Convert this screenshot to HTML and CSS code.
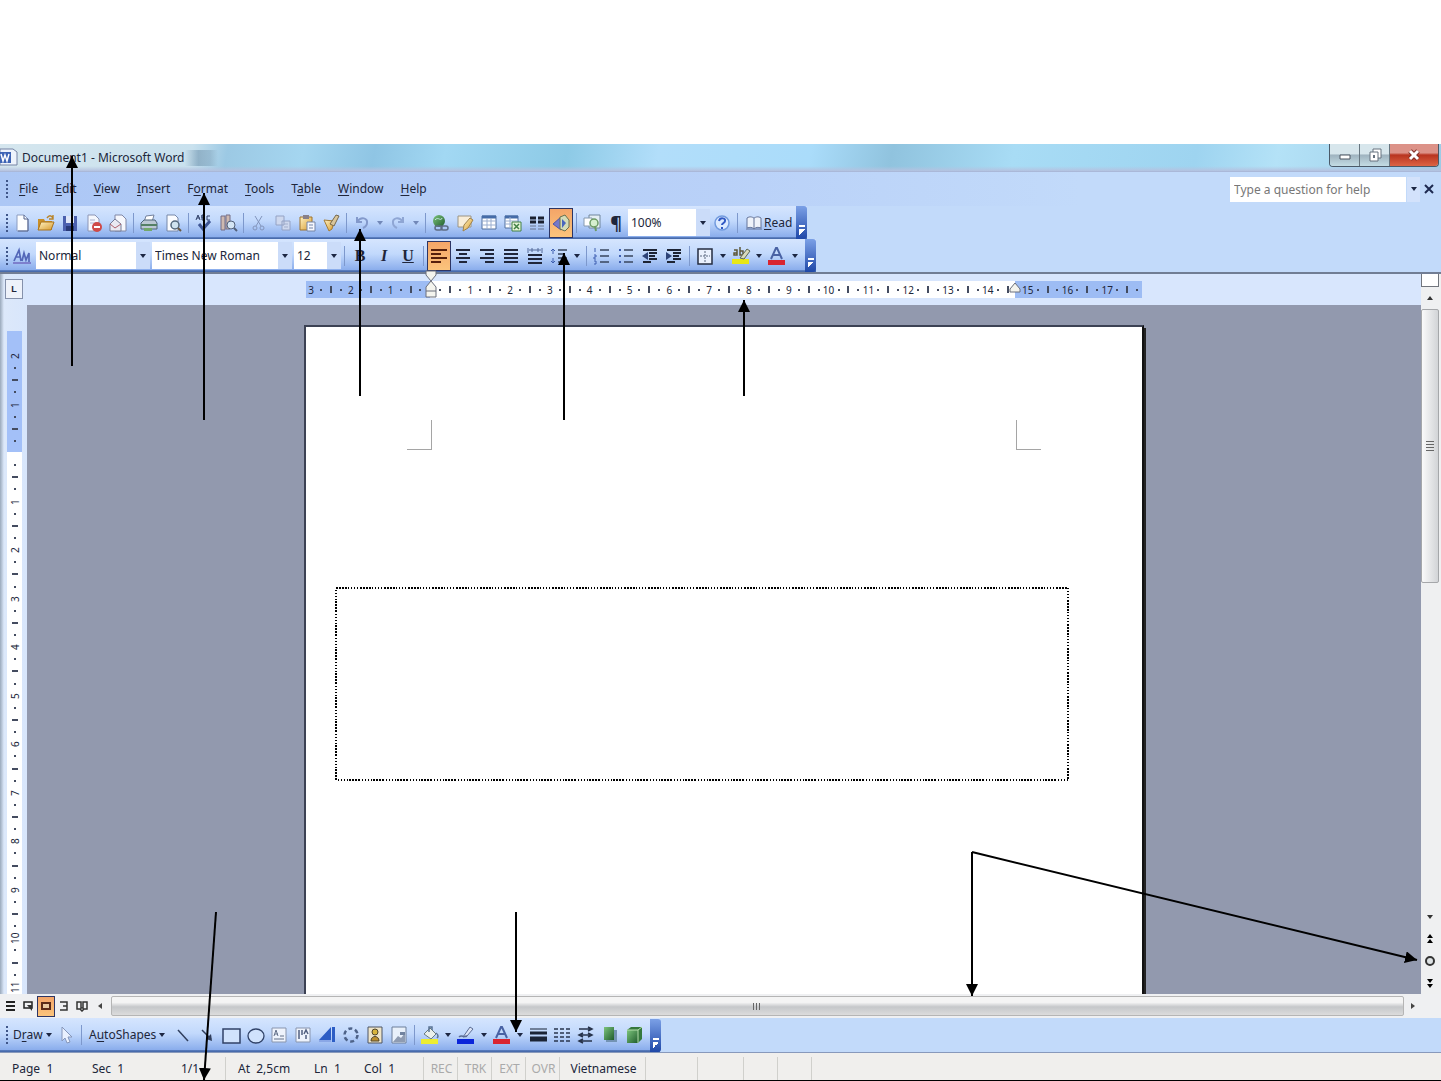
FILE: index.html
```html
<!DOCTYPE html>
<html lang="en">
<head>
<meta charset="utf-8">
<title>Document1 - Microsoft Word</title>
<link rel="stylesheet" href="styles.css">
</head>
<body>
<svg class="defs" aria-hidden="true">
  <defs>
    <linearGradient id="gold" x2="1" y2="1"><stop stop-color="#fff3c4"/><stop offset="1" stop-color="#d89a2c"/></linearGradient>
    <linearGradient id="green" x2="1" y2="1"><stop stop-color="#7cc47c"/><stop offset="1" stop-color="#1f5c2c"/></linearGradient>
    <marker id="head" viewBox="0 0 12 12" refX="12" refY="6" markerWidth="12" markerHeight="12" markerUnits="userSpaceOnUse" orient="auto"><path d="M0 0 12 6 0 12z"/></marker>
    <symbol id="i-new" viewBox="0 0 20 20"><path d="M5 2h7l4 4v12H5z" fill="#fdfeff" stroke="#8c9cc0"/><path d="M12 2v4h4M16 6v12H6" fill="none" stroke="#52628c"/></symbol>
    <symbol id="i-open" viewBox="0 0 20 20"><path d="M2 6h6l1 2h7v9H2z" fill="#c98f28"/><path d="M5 9h13l-3 8H2z" fill="url(#gold)" stroke="#a8731c"/><path d="M11 5c2-3 4-3 6 0m0-3v4h-4" fill="none" stroke="#b98428" stroke-width="1.4"/></symbol>
    <symbol id="i-save" viewBox="0 0 20 20"><path d="M3 3h14v15H3z" fill="#4b60ae"/><path d="M6 3h8v7H6z" fill="#dfe6f8"/><path d="M6 13h8v5H6z" fill="#293a78"/><path d="M11 14h2v3h-2z" fill="#fff"/></symbol>
    <symbol id="i-perm" viewBox="0 0 20 20"><path d="M4 2h7l4 4v12H4z" fill="#f5f7fd" stroke="#8c95b4"/><path d="M6 7h5M6 10h7" stroke="#a9b2cc"/><circle cx="13" cy="14" r="5" fill="#cf4a48"/><path d="M10 14h6" stroke="#fff" stroke-width="2"/></symbol>
    <symbol id="i-mail" viewBox="0 0 20 20"><path d="M7 2h7l4 4v12H7z" fill="#f6f7fc" stroke="#8088a6"/><path d="m2 11 5-5 6 5v7H2z" fill="#e9e9f2" stroke="#767c96"/><path d="m2 11 5 4 6-4" fill="none" stroke="#b0606c"/></symbol>
    <symbol id="i-print" viewBox="0 0 20 20"><path d="m7 3 8-1-2 7H5z" fill="#fff" stroke="#72809c"/><path d="m2 10 3-3h11l2 3v6H2z" fill="#bcc8d4" stroke="#4e6478"/><path d="M2 12h16" stroke="#558066" stroke-width="2"/><path d="M5 15h8v3H5z" fill="#73a86a"/></symbol>
    <symbol id="i-preview" viewBox="0 0 20 20"><path d="M4 2h8l3 3v13H4z" fill="#fbfcff" stroke="#7787a8"/><circle cx="12" cy="12" r="4" fill="#cfe3ef" stroke="#52687c" stroke-width="1.5"/><path d="m15 15 3 3" stroke="#695a42" stroke-width="2"/></symbol>
    <symbol id="i-spell" viewBox="0 0 20 20"><path d="M2 7 4 2l2 5M3 5h3M8 2v5h2V5H8V2h2v3m6-2h-3v4h3" fill="none" stroke="#304068"/><path d="m5 11 4 5 7-8" fill="none" stroke="#3f5796" stroke-width="3"/></symbol>
    <symbol id="i-research" viewBox="0 0 20 20"><path d="M3 3h4v14H3zm5-1h4v14H8z" fill="#ceb9b0" stroke="#756d84"/><circle cx="13" cy="12" r="4" fill="#d4e5f4" stroke="#52607a"/><path d="m16 15 3 3" stroke="#52607a" stroke-width="2"/></symbol>
    <symbol id="i-cut" viewBox="0 0 20 20"><path d="m6 3 6 10m1-10L7 13" fill="none" stroke="#8395bc"/><circle cx="6" cy="15" r="2" fill="none" stroke="#8395bc"/><circle cx="13" cy="15" r="2" fill="none" stroke="#8395bc"/></symbol>
    <symbol id="i-copy" viewBox="0 0 20 20"><path d="M3 3h8v9H3zm6 5h8v9H9z" fill="#ced8ee" stroke="#94a2c4"/><path d="M11 11h4m-4 3h4" stroke="#a3afcc"/></symbol>
    <symbol id="i-paste" viewBox="0 0 20 20"><path d="M3 4h12v13H3z" fill="url(#gold)" stroke="#9e722c"/><path d="M6 2h6v4H6z" fill="#88808a"/><path d="M10 9h8v9h-8z" fill="#f6f8fe" stroke="#7585a8"/><path d="M12 12h4m-4 3h4" stroke="#7585a8"/></symbol>
    <symbol id="i-brush" viewBox="0 0 20 20"><path d="m3 7 10 1-2 8-3 2z" fill="url(#gold)" stroke="#a67b30"/><path d="m9 11 6-9 3 1-5 10z" fill="#d9c69c" stroke="#75684e"/></symbol>
    <symbol id="i-undo" viewBox="0 0 20 20"><path d="M5 4v5h5M5 9c4-6 11-4 10 1 0 3-2 4-4 5" fill="none" stroke="#8399cb" stroke-width="2"/></symbol>
    <symbol id="i-redo" viewBox="0 0 20 20"><path d="M15 4v5h-5m5 0C11 3 4 5 5 10c0 3 2 4 4 5" fill="none" stroke="#8fa6d4" stroke-width="2"/></symbol>
    <symbol id="i-link" viewBox="0 0 20 20"><circle cx="8" cy="8" r="6" fill="url(#green)"/><path d="M4 7c3-4 6 2 7-2" stroke="#c0e2dc" fill="none"/><rect x="4" y="13" width="7" height="4" rx="2" fill="none" stroke="#5d6c84" stroke-width="1.5"/><rect x="10" y="13" width="7" height="4" rx="2" fill="none" stroke="#5d6c84" stroke-width="1.5"/></symbol>
    <symbol id="i-tables" viewBox="0 0 20 20"><path d="M3 3h13v11H3z" fill="#f8edd8" stroke="#9a9484"/><path d="m8 18 1-6 6-7 3 2-5 8z" fill="url(#gold)" stroke="#a0824a"/></symbol>
    <symbol id="i-table" viewBox="0 0 20 20"><path d="M3 3h14v13H3z" fill="#fff" stroke="#52709e"/><path d="M3 4h14" stroke="#456ca8" stroke-width="3"/><path d="M3 8h14M3 12h14M8 5v11M12 5v11" stroke="#9aaed0"/></symbol>
    <symbol id="i-excel" viewBox="0 0 20 20"><path d="M2 3h13v12H2z" fill="#fff" stroke="#52709e"/><path d="M2 4h13" stroke="#456ca8" stroke-width="3"/><path d="M2 8h13M2 11h13M7 4v10" stroke="#9aaed0"/><path d="M9 9h9v9H9z" fill="#e5f3d8" stroke="#408044"/><path d="m11 11 5 5m0-5-5 5" stroke="#408044" stroke-width="1.5"/></symbol>
    <symbol id="i-cols" viewBox="0 0 20 20"><path d="M3 5h6m2 0h6M3 9h6m2 0h6" stroke="#1b2130" stroke-width="3"/><path d="M3 13h6m2 0h6M3 16h6m2 0h6" stroke="#68758e"/></symbol>
    <symbol id="i-drawing" viewBox="0 0 20 20"><path d="m2 11 8-7v13z" fill="#7478c8" stroke="#5054a8"/><path d="m9 4 5-2 4 5v7l-4 4-5-2z" fill="#d4dcb8" stroke="#69714e"/><path d="M11 6v9l4-5z" fill="#4966bd"/></symbol>
    <symbol id="i-map" viewBox="0 0 20 20"><path d="M7 2h11v13H7z" fill="#e4eef4" stroke="#71869c"/><path d="M2 5h8v8H2z" fill="#fff" stroke="#869ab0"/><circle cx="12" cy="10" r="4" fill="#d6efce" stroke="#6c9a64" stroke-width="1.5"/><path d="m13 13 1 5" stroke="#6c9a64" stroke-width="2"/></symbol>
    <symbol id="i-help" viewBox="0 0 20 20"><circle cx="10" cy="10" r="7" fill="#dceaff" stroke="#719ade" stroke-width="1.5"/><path d="M7 8c1-4 7-3 6 0 0 2-3 2-3 4m0 2v2" fill="none" stroke="#3159c4" stroke-width="2"/></symbol>
    <symbol id="i-book" viewBox="0 0 20 20"><path d="M3 5c3-2 5-1 7 0 2-1 4-2 7 0v10c-3-1-5-1-7 1-2-2-4-2-7-1z" fill="#eef2fa" stroke="#64749a"/><path d="M10 5v11M2 16h16" stroke="#64749a"/></symbol>
    <symbol id="i-styles" viewBox="0 0 20 20"><path d="m2 15 5-11 2 11M4 11h5m1 4 2-8 2 7 3-7v9" fill="none" stroke="#5367b8" stroke-width="1.7"/><path d="M1 17h18" stroke="#726ac0" stroke-width="1.5"/></symbol>
    <symbol id="i-left" viewBox="0 0 20 20"><path d="M2 4h16M2 8h10M2 12h16M2 16h10" stroke="currentColor" stroke-width="2"/></symbol>
    <symbol id="i-center" viewBox="0 0 20 20"><path d="M3 4h14M6 8h8M3 12h14M6 16h8" stroke="currentColor" stroke-width="2"/></symbol>
    <symbol id="i-right" viewBox="0 0 20 20"><path d="M3 4h14M8 8h9M3 12h14M8 16h9" stroke="currentColor" stroke-width="2"/></symbol>
    <symbol id="i-justify" viewBox="0 0 20 20"><path d="M3 4h14M3 8h14M3 12h14M3 16h14" stroke="currentColor" stroke-width="2"/></symbol>
    <symbol id="i-dist" viewBox="0 0 20 20"><path d="M3 2v5m14-5v5M4 4h12M7 2v4m6-4v4" stroke="#536898"/><path d="M3 9h14M3 13h14M3 17h14" stroke="currentColor" stroke-width="2"/></symbol>
    <symbol id="i-spacing" viewBox="0 0 20 20"><path d="M4 3v5M2 5l2-2 2 2m-2 7v5m-2-2 2 2 2-2" stroke="#3e5fb0" fill="none"/><path d="M9 4h9M9 8h6M9 12h9M9 16h6" stroke="#38465e" stroke-width="1.5"/></symbol>
    <symbol id="i-num" viewBox="0 0 20 20"><path d="M3 2v4M2 9h2v2H2v2h2M2 15h2v3H2" stroke="#3e5fb0" fill="none"/><path d="M8 4h9M8 10h9M8 16h9" stroke="#38465e" stroke-width="1.5"/></symbol>
    <symbol id="i-bul" viewBox="0 0 20 20"><path d="M3 4h2M3 10h2M3 16h2" stroke="#3e5fb0" stroke-width="2"/><path d="M8 4h9M8 10h9M8 16h9" stroke="#38465e" stroke-width="1.5"/></symbol>
    <symbol id="i-outd" viewBox="0 0 20 20"><path d="M3 4h14M9 7h8M9 10h6M9 13h8M3 16h8" stroke="#1d2434" stroke-width="2"/><path d="m8 6-6 4 6 4z" fill="#2d4377"/></symbol>
    <symbol id="i-ind" viewBox="0 0 20 20"><path d="M3 4h14M9 7h8M9 10h6M9 13h8M3 16h8" stroke="#1d2434" stroke-width="2"/><path d="m2 6 6 4-6 4z" fill="#2d4377"/></symbol>
    <symbol id="i-border" viewBox="0 0 20 20"><path d="M3 3h14v15H3z" fill="#eaf1fe" stroke="#242c40" stroke-width="1.5"/><path d="M10 5v11M5 10h10" stroke="#58667e" stroke-dasharray="2 1"/></symbol>
    <symbol id="i-hilite" viewBox="0 0 20 20"><path d="M1 13h17v5H1z" fill="#e8e716"/><path d="M3 4h3v5H3V7h3m3-6v8h3V5H9" stroke="#5c5738" fill="none" stroke-width="1.5"/><path d="m9 12 7-9 3 2-6 8z" fill="#d8dabc" stroke="#5c6550"/></symbol>
    <symbol id="i-color" viewBox="0 0 20 20"><path d="M1 14h17v5H1z" fill="#d92430"/><path d="m4 13 5-11h1l5 11M6 9h7" fill="none" stroke="#4962a4" stroke-width="2"/></symbol>
    <symbol id="i-pointer" viewBox="0 0 20 20"><path d="M6 2v14l3-3 2 5 3-1-2-5h4z" fill="#e9f1ff" stroke="#8596ba"/></symbol>
    <symbol id="i-line" viewBox="0 0 20 20"><path d="m5 5 10 11" stroke="#303e5c" stroke-width="1.5"/></symbol>
    <symbol id="i-arrow" viewBox="0 0 20 20"><path d="m5 5 9 9" stroke="#303e5c" stroke-width="1.5"/><path d="m15 16-6-2 5-5z" fill="#303e5c"/></symbol>
    <symbol id="i-rect" viewBox="0 0 20 20"><path d="M2 4h17v14H2z" fill="#d0e2fc" stroke="#304267" stroke-width="1.5"/></symbol>
    <symbol id="i-oval" viewBox="0 0 20 20"><ellipse cx="11" cy="11" rx="8" ry="7" fill="#d0e2fc" stroke="#304267" stroke-width="1.3"/></symbol>
    <symbol id="i-text" viewBox="0 0 20 20"><path d="M3 3h14v14H3z" fill="#eef3fc" stroke="#8995ad"/><path d="m5 11 2-6 2 6m-3-2h3m2 2h4M5 14h10" fill="none" stroke="#637089"/></symbol>
    <symbol id="i-vtext" viewBox="0 0 20 20"><path d="M3 3h14v14H3z" fill="#eef3fc" stroke="#8995ad"/><path d="M6 5v9m3-9v5m2-1 2-4 2 4m-2 1v4" fill="none" stroke="#526080" stroke-width="1.5"/></symbol>
    <symbol id="i-wordart" viewBox="0 0 20 20"><path d="M2 15 14 2v13zM15 2h3v15h-3z" fill="#2c5dc5"/><path d="M2 15h12v2H2z" fill="#8aa7e6"/></symbol>
    <symbol id="i-diagram" viewBox="0 0 20 20"><circle cx="10" cy="10" r="6.500" fill="none" stroke="#4d6288" stroke-width="2.500" stroke-dasharray="4 2.800"/></symbol>
    <symbol id="i-clip" viewBox="0 0 20 20"><path d="M3 2h14v16H3z" fill="#eee4c8" stroke="#4d5465"/><circle cx="10" cy="7" r="3" fill="#d8b43c" stroke="#51462c"/><path d="M6 16c0-6 8-6 8 0z" fill="#bd9030" stroke="#51462c"/></symbol>
    <symbol id="i-pic" viewBox="0 0 20 20"><path d="M3 2h14v16H3z" fill="#e8f0fa" stroke="#6c7e9a"/><path d="m4 17 5-6 3 2 4-5v9z" fill="#8e9bb1"/><path d="M11 7h5v3h-5z" fill="#71839f"/></symbol>
    <symbol id="i-fill" viewBox="0 0 20 20"><path d="M1 14h17v5H1z" fill="#eced32"/><path d="m4 9 6-6 6 6-5 5z" fill="#eaf0ec" stroke="#687b80"/><path d="M9 7V2h3v3m4 3c3 2 2 4 1 5" fill="none" stroke="#5a7394" stroke-width="1.5"/></symbol>
    <symbol id="i-pen" viewBox="0 0 20 20"><path d="M1 14h17v5H1z" fill="#0b25da"/><path d="m7 12 7-10 3 2-6 7z" fill="#dce5f6" stroke="#5c6c94"/><path d="M3 12c3-3 4 1 8-1" fill="none" stroke="#5c6c94" stroke-width="1.5"/></symbol>
    <symbol id="i-weight" viewBox="0 0 20 20"><path d="M2 4h17" stroke="#1b2436"/><path d="M2 8h17" stroke="#1b2436" stroke-width="3"/><path d="M2 14h17" stroke="#1b2436" stroke-width="5"/></symbol>
    <symbol id="i-dash" viewBox="0 0 20 20"><path d="M2 4h16M2 8h16M2 12h16M2 16h16" stroke="#28344c" stroke-width="1.5" stroke-dasharray="4 2"/></symbol>
    <symbol id="i-arrows" viewBox="0 0 20 20"><path d="M3 4h13M3 10h13M3 16h13m-4-14 4 2-4 2M7 8l-4 2 4 2m5-4 4 2-4 2M7 14l-4 2 4 2" fill="none" stroke="#28344c" stroke-width="1.5"/></symbol>
    <symbol id="i-shadow" viewBox="0 0 20 20"><path d="M6 5h11v12H6z" fill="#7393b4"/><path d="M4 2h10v13H4z" fill="url(#green)"/></symbol>
    <symbol id="i-3d" viewBox="0 0 20 20"><path d="m3 5 4-3h11v12l-4 4H3z" fill="#35783c"/><path d="M3 5h11v13H3z" fill="url(#green)"/><path d="M3 5h11v13m0-13 4-3" fill="none" stroke="#b4dfac"/></symbol>
  </defs>
</svg>

<main class="window">
  <header class="title">
    <svg class="logo" viewBox="0 0 20 18" aria-hidden="true"><path d="M0 1h13l4 3v13H0z" fill="#edf3fc" stroke="#7483a4"/><path d="M0 4h11v11H0z" fill="#3e64b5"/><path d="m1 6 2 7 2-6 2 6 2-7" fill="none" stroke="#fff" stroke-width="1.5"/></svg>
    <h1>Document1 - Microsoft Word</h1>
    <div class="winbtns">
      <button aria-label="Minimize"><svg viewBox="0 0 16 16"><path d="M3 8h10v4H3z" fill="#fff" stroke="#4a5560"/></svg></button>
      <button aria-label="Restore"><svg viewBox="0 0 16 16"><path d="M6 2h8v9H6z" fill="#fff" stroke="#66727e"/><path d="M3 5h8v9H3z" fill="#fff" stroke="#66727e"/><path d="M6 8h2v3H6z" fill="#66727e"/></svg></button>
      <button class="close" aria-label="Close"><svg viewBox="0 0 16 16"><path d="m4 4 8 8m0-8-8 8" stroke="#803028" stroke-width="5"/><path d="m4 4 8 8m0-8-8 8" stroke="#fff" stroke-width="3"/></svg></button>
    </div>
  </header>

  <nav class="menu">
    <i class="grip"></i>
    <button><u>F</u>ile</button><button><u>E</u>dit</button><button><u>V</u>iew</button><button><u>I</u>nsert</button><button>F<u>o</u>rmat</button><button><u>T</u>ools</button><button>T<u>a</u>ble</button><button><u>W</u>indow</button><button><u>H</u>elp</button>
    <input class="ask" type="text" placeholder="Type a question for help" aria-label="Type a question for help">
    <button class="askdrop drop" aria-label="Help questions"></button>
    <button class="docclose" aria-label="Close document"><svg viewBox="0 0 12 12"><path d="m2 2 8 8m0-8-8 8" stroke="#1d2950" stroke-width="2"/></svg></button>
  </nav>

  <div class="dock">
    <div class="bar" role="toolbar" aria-label="Standard">
      <i class="grip"></i>
      <button class="t" aria-label="New"><svg><use href="#i-new"/></svg></button><button class="t" aria-label="Open"><svg><use href="#i-open"/></svg></button><button class="t" aria-label="Save"><svg><use href="#i-save"/></svg></button><button class="t" aria-label="Permission"><svg><use href="#i-perm"/></svg></button><button class="t" aria-label="E-mail"><svg><use href="#i-mail"/></svg></button>
      <i class="sep"></i>
      <button class="t" aria-label="Print"><svg><use href="#i-print"/></svg></button><button class="t" aria-label="Print preview"><svg><use href="#i-preview"/></svg></button>
      <i class="sep"></i>
      <button class="t" aria-label="Spelling"><svg><use href="#i-spell"/></svg></button><button class="t" aria-label="Research"><svg><use href="#i-research"/></svg></button>
      <i class="sep"></i>
      <button class="t" aria-label="Cut"><svg><use href="#i-cut"/></svg></button><button class="t" aria-label="Copy"><svg><use href="#i-copy"/></svg></button><button class="t" aria-label="Paste"><svg><use href="#i-paste"/></svg></button><button class="t" aria-label="Format painter"><svg><use href="#i-brush"/></svg></button>
      <i class="sep"></i>
      <button class="t" aria-label="Undo"><svg><use href="#i-undo"/></svg></button><button class="drop dim" aria-label="Undo list"></button><button class="t" aria-label="Redo"><svg><use href="#i-redo"/></svg></button><button class="drop dim" aria-label="Redo list"></button>
      <i class="sep"></i>
      <button class="t" aria-label="Hyperlink"><svg><use href="#i-link"/></svg></button><button class="t" aria-label="Tables and borders"><svg><use href="#i-tables"/></svg></button><button class="t" aria-label="Insert table"><svg><use href="#i-table"/></svg></button><button class="t" aria-label="Insert worksheet"><svg><use href="#i-excel"/></svg></button><button class="t" aria-label="Columns"><svg><use href="#i-cols"/></svg></button><button class="t on" aria-label="Drawing"><svg><use href="#i-drawing"/></svg></button>
      <i class="sep"></i>
      <button class="t" aria-label="Document map"><svg><use href="#i-map"/></svg></button><button class="t pilcrow" aria-label="Show marks">¶</button>
      <span class="combo zoom"><select aria-label="Zoom"><option>100%</option></select></span>
      <button class="t" aria-label="Help"><svg><use href="#i-help"/></svg></button>
      <i class="sep"></i>
      <button class="read"><svg><use href="#i-book"/></svg><span><u>R</u>ead</span></button>
      <button class="cap" aria-label="Toolbar options"></button>
    </div>

    <div class="bar" role="toolbar" aria-label="Formatting">
      <i class="grip"></i>
      <button class="t" aria-label="Styles"><svg><use href="#i-styles"/></svg></button>
      <span class="combo style"><select aria-label="Style"><option>Normal</option></select></span>
      <span class="combo font"><select aria-label="Font"><option>Times New Roman</option></select></span>
      <span class="combo size"><select aria-label="Font size"><option>12</option></select></span>
      <i class="sep"></i>
      <button class="t biu">B</button><button class="t biu it">I</button><button class="t biu un">U</button>
      <i class="sep"></i>
      <button class="t on" aria-label="Align left"><svg><use href="#i-left"/></svg></button><button class="t" aria-label="Center"><svg><use href="#i-center"/></svg></button><button class="t" aria-label="Align right"><svg><use href="#i-right"/></svg></button><button class="t" aria-label="Justify"><svg><use href="#i-justify"/></svg></button><button class="t" aria-label="Distribute"><svg><use href="#i-dist"/></svg></button><button class="t" aria-label="Line spacing"><svg><use href="#i-spacing"/></svg></button><button class="drop" aria-label="Line spacing list"></button>
      <i class="sep"></i>
      <button class="t" aria-label="Numbering"><svg><use href="#i-num"/></svg></button><button class="t" aria-label="Bullets"><svg><use href="#i-bul"/></svg></button><button class="t" aria-label="Decrease indent"><svg><use href="#i-outd"/></svg></button><button class="t" aria-label="Increase indent"><svg><use href="#i-ind"/></svg></button>
      <i class="sep"></i>
      <button class="t" aria-label="Borders"><svg><use href="#i-border"/></svg></button><button class="drop" aria-label="Border list"></button><button class="t" aria-label="Highlight"><svg><use href="#i-hilite"/></svg></button><button class="drop" aria-label="Highlight list"></button><button class="t" aria-label="Font color"><svg><use href="#i-color"/></svg></button><button class="drop" aria-label="Color list"></button>
      <button class="cap" aria-label="Toolbar options"></button>
    </div>
  </div>

  <section class="work">
    <div class="vruler"><button class="tab" aria-label="Tab stop">L</button><div class="vtrack" id="vtrack"></div></div>
    <div class="center">
      <div class="hruler">
        <div class="htrack" id="htrack">
          <svg class="indent first" viewBox="0 0 12 28"><path d="M1 1h10v4l-5 6-5-6zM6 11l5 6v10H1V17zM1 21h10" fill="#f4f4ee" stroke="#6a6f7c"/></svg>
          <svg class="indent last" viewBox="0 0 12 28"><path d="m6 13 5 6v3H1v-3z" fill="#f4f4ee" stroke="#6a6f7c"/></svg>
        </div>
      </div>
      <div class="canvas"><article class="page"><i class="corner"></i><i class="corner flip"></i></article></div>
    </div>
    <div class="vscroll">
      <i class="split"></i><button class="up" aria-label="Scroll up"></button>
      <div class="vthumb"><i></i></div><div class="fill"></div>
      <button class="down" aria-label="Scroll down"></button>
      <button aria-label="Previous page"><svg viewBox="0 0 12 12"><path d="m6 1 3 4H3zm0 5 3 4H3z"/></svg></button>
      <button aria-label="Browse object"><svg viewBox="0 0 12 12"><circle cx="6" cy="6" r="4" fill="#dde2e4" stroke="#333" stroke-width="2"/></svg></button>
      <button aria-label="Next page"><svg viewBox="0 0 12 12"><path d="m6 6 3-4H3zm0 5 3-4H3z"/></svg></button>
    </div>
  </section>

  <div class="hscroll">
    <button class="v" aria-label="Normal view"><svg viewBox="0 0 12 12"><path d="M2 2h9M2 6h9M2 10h9" stroke="#222" stroke-width="2"/></svg></button>
    <button class="v" aria-label="Web view"><svg viewBox="0 0 12 12"><path d="M2 2h8v6H2z" fill="none" stroke="#222" stroke-width="1.5"/><path d="M5 5h5v6z" fill="#333"/></svg></button>
    <button class="v on" aria-label="Print view"><svg viewBox="0 0 12 12"><path d="M2 3h8v6H2z" fill="#e8c8a0" stroke="#5b2b18" stroke-width="2"/></svg></button>
    <button class="v" aria-label="Outline view"><svg viewBox="0 0 12 12"><path d="M2 2h7v4H5m4 0v4H2" fill="none" stroke="#333" stroke-width="1.5"/></svg></button>
    <button class="v" aria-label="Reading view"><svg viewBox="0 0 12 12"><path d="M5 2H1v7h3l2 2 2-2h3V2H7v6H5z" fill="none" stroke="#333" stroke-width="1.5"/></svg></button>
    <button class="v lt" aria-label="Scroll left"></button>
    <div class="hthumb"><i></i></div>
    <button class="v rt" aria-label="Scroll right"></button>
  </div>

  <div class="bar draw" role="toolbar" aria-label="Drawing tools">
    <i class="grip"></i>
    <button class="word w1"><span>D<u>r</u>aw</span></button><button class="t" aria-label="Select"><svg><use href="#i-pointer"/></svg></button>
    <i class="sep"></i>
    <button class="word w2"><span>A<u>u</u>toShapes</span></button>
    <button class="t" aria-label="Line"><svg><use href="#i-line"/></svg></button><button class="t" aria-label="Arrow"><svg><use href="#i-arrow"/></svg></button><button class="t" aria-label="Rectangle"><svg><use href="#i-rect"/></svg></button><button class="t" aria-label="Oval"><svg><use href="#i-oval"/></svg></button><button class="t" aria-label="Text box"><svg><use href="#i-text"/></svg></button><button class="t" aria-label="Vertical text"><svg><use href="#i-vtext"/></svg></button><button class="t" aria-label="WordArt"><svg><use href="#i-wordart"/></svg></button><button class="t" aria-label="Diagram"><svg><use href="#i-diagram"/></svg></button><button class="t" aria-label="Clip art"><svg><use href="#i-clip"/></svg></button><button class="t" aria-label="Picture"><svg><use href="#i-pic"/></svg></button>
    <i class="sep"></i>
    <button class="t" aria-label="Fill color"><svg><use href="#i-fill"/></svg></button><button class="drop" aria-label="Fill list"></button><button class="t" aria-label="Line color"><svg><use href="#i-pen"/></svg></button><button class="drop" aria-label="Line color list"></button><button class="t" aria-label="Text color"><svg><use href="#i-color"/></svg></button><button class="drop" aria-label="Text color list"></button><button class="t" aria-label="Line style"><svg><use href="#i-weight"/></svg></button><button class="t" aria-label="Dash style"><svg><use href="#i-dash"/></svg></button><button class="t" aria-label="Arrow style"><svg><use href="#i-arrows"/></svg></button><button class="t" aria-label="Shadow"><svg><use href="#i-shadow"/></svg></button><button class="t" aria-label="3-D"><svg><use href="#i-3d"/></svg></button>
    <button class="cap" aria-label="Toolbar options"></button>
  </div>

  <footer class="status">
    <div class="cell pg"><span>Page&nbsp; 1</span><span>Sec&nbsp; 1</span><span>1/1</span></div>
    <div class="cell at"><span>At&nbsp; 2,5cm</span><span>Ln&nbsp; 1</span><span>Col&nbsp; 1</span></div>
    <div class="cell off">REC</div><div class="cell off">TRK</div><div class="cell off">EXT</div><div class="cell off">OVR</div>
    <div class="cell lang">Vietnamese</div><div class="cell wide"></div><div class="cell mid"></div><div class="cell off"></div><div class="cell off"></div>
  </footer>
</main>

<svg class="notes" width="1441" height="1081" aria-hidden="true">
  <rect x="336" y="588" width="732" height="192"/>
  <path d="M72 366V156"/><path d="M204 420V193"/><path d="M360 396V229"/><path d="M564 420V253"/><path d="M744 396V300"/>
  <path d="M216 912 204 1080"/><path d="M516 912V1032"/><path d="M972 852V996"/><path d="M972 852 1417 960"/>
</svg>
<script src="rulers.js"></script>
</body>
</html>
```
FILE: styles.css
```css
* { box-sizing: border-box; }
body { margin: 0; background: #fff; font: 12px/16px "Noto Sans", "Open Sans", sans-serif; color: #20263a; }
button, input, select { font: inherit; color: inherit; margin: 0; padding: 0; border: 0; border-radius: 0; background: none; }
svg { display: block; }
i { display: block; flex: none; }
.defs { position: absolute; width: 0; height: 0; }
.window { min-height: 100vh; padding-top: 144px; display: flex; flex-direction: column; border-bottom: 1px solid #000; overflow: hidden; }

.title { height: 28px; display: flex; align-items: flex-start; border-bottom: 1px solid #aab8d8;
  background: linear-gradient(#fff0 82%, #b5c2e0), linear-gradient(100deg, #d5e6ee 0, #c9e1ee 190px, #9cc9e4 225px, #a5d6f0 300px, #8fc5e4 370px, #a2d8f3 440px, #8dcae6 560px, #b2defa 650px, #aadcfa 800px, #90c3de 880px, #a8dcf5 1000px, #9ed4f0 1180px, #b4e2f7 1260px, #9ccbe6 100%); }
.logo { width: 20px; height: 18px; margin: 4px 2px 0 0; }
h1 { margin: 6px 0 0; font-size: 12px; line-height: 16px; font-weight: 400; padding-right: 34px; background: linear-gradient(90deg, #fff0 83%, #7296b099 90%, #7296b066 96%, #fff0); }
.winbtns { display: flex; margin: 0 2px 0 auto; border: 1px solid #4a5968; border-top: 0; border-radius: 0 0 4px 4px; overflow: hidden; }
.winbtns button { width: 30px; height: 22px; display: grid; place-items: center; background: linear-gradient(#d7e6ec 45%, #9fb3bf 50%, #c3dce4); border-right: 1px solid #66757f; }
.winbtns svg { width: 16px; height: 16px; }
.winbtns .close { width: 48px; border: 0; background: linear-gradient(#dc9288 40%, #b83420 50%, #dc6444); }

.menu { height: 34px; padding: 0 6px; display: flex; align-items: center; gap: 1px; background: linear-gradient(90deg, #acc7f5, #b9d1f8 50%, #c2dafa 75%); }
.grip { width: 2px; height: 18px; margin-right: 2px; background: repeating-linear-gradient(#3f5689 0 2px, #fff0 2px 4px); }
.menu button { padding: 0 8px; }
u { text-underline-offset: 2px; }
.menu .ask { width: 176px; height: 25px; margin-left: auto; padding: 0 4px; background: #fff; }
.ask::placeholder { color: #777; opacity: 1; }
.menu .askdrop { height: 25px; width: 13px; padding: 0; background: #d3e2fb; }
.menu .docclose { padding: 0; width: 12px; margin-left: 2px; }

.dock { background: #c2dafa; border-bottom: 2px solid #717d94; }
.bar { height: 33px; width: max-content; padding-left: 6px; display: flex; align-items: center; background: linear-gradient(#d5e5fe, #c2d9fc 45%, #8aadec 94%, #486bac 96%); }
.t { width: 24px; height: 30px; display: grid; place-items: center; flex: none; }
.t svg, .read svg { width: 20px; height: 20px; }
.on { background: linear-gradient(#f4a568, #fbc47c); border: 1px solid #2d3564; }
.t.on { color: #56200c; }
.sep { width: 7px; height: 20px; background: linear-gradient(#7d98cc, #7d98cc) 3px 0 / 1px 100% no-repeat; }
.drop { width: 12px; height: 24px; display: grid; place-items: center; flex: none; }
.drop::before, .combo::after, .word::after { content: ""; border: 3px solid transparent; border-top: 4px solid #1d2742; border-bottom: 0; }
.dim::before { border-top-color: #7288b8; }
.pilcrow { font-size: 18px; font-weight: 700; }
.combo { display: grid; grid-template-columns: 1fr 14px; align-items: center; height: 27px; background: linear-gradient(90deg, #fff, #fff) 0 0 / calc(100% - 14px) 100% no-repeat, #cbdcf9; margin-right: 2px; }
.combo::after { grid-area: 1 / 2; justify-self: center; pointer-events: none; }
.combo select { grid-area: 1 / 1 / 2 / 3; appearance: none; height: 27px; width: 100%; padding-left: 3px; }
.zoom { width: 82px; margin-right: 0; }
.style { width: 114px; margin-left: 2px; }
.font { width: 140px; }
.size { width: 47px; margin-right: 0; }
.biu { font: 700 16px/20px "Liberation Serif", serif; }
.it { font-style: italic; }
.un { text-decoration: underline; }
.read { display: flex; align-items: center; padding-left: 3px; }
.cap { width: 11px; height: 33px; margin-left: 4px; border-radius: 0 3px 3px 0; display: grid; align-items: end; justify-items: center; background: linear-gradient(#7ba0e6, #1f48a8); }
.cap::before { content: ""; width: 6px; height: 10px; margin-bottom: 2px; border-top: 2px solid #fff; background: linear-gradient(135deg, #fff 50%, #fff0 50%) 0 2px / 6px 6px no-repeat; }

.work { flex: 1; display: flex; min-height: 400px; }
.vruler { width: 27px; display: flex; flex-direction: column; background: linear-gradient(90deg, #9aa9bb, #dce8fa 4px, #d8e6fc); }
.tab { width: 18px; height: 20px; margin: 5px 0 0 5px; border: 1px solid #8591ab; background: #eef2fa; font: 700 9px/16px "Liberation Sans", sans-serif; flex: none; }
.vtrack { flex: 1; display: flex; flex-direction: column; margin: 32px 5px 0 7px; padding-top: 19px; background: linear-gradient(#a3c0f8 121px, #fff 121px); }
.vcell { flex: 1; display: grid; grid-template-rows: 12px repeat(3, 1fr); justify-items: center; align-items: center; font-size: 10px; line-height: 12px; }
.vcell:last-child { flex: none; height: 13px; }
.vcell span { writing-mode: vertical-rl; transform: rotate(180deg); display: flex; justify-content: center; height: 12px; }
.vcell i { width: 2px; height: 2px; background: #444c60; }
.vcell i:nth-of-type(2) { width: 6px; }
.center { flex: 1; min-width: 0; display: flex; flex-direction: column; }
.hruler { height: 31px; display: flex; justify-content: center; align-items: center; background: #d8e6fd; }
.htrack { position: relative; width: 836px; height: 17px; display: flex; background: linear-gradient(90deg, #9dbcf4 124px, #fff 124px 709px, #9dbcf4 709px); }
.hcell { flex: 1; display: grid; grid-template-columns: 10px repeat(3, 1fr); align-items: center; justify-items: center; font-size: 10px; line-height: 16px; }
.hcell span { display: flex; justify-content: center; width: 10px; }
.hcell i { width: 2px; height: 2px; background: #444c60; }
.hcell i:nth-of-type(2) { height: 7px; }
.indent { position: absolute; top: -11px; width: 12px; height: 28px; }
.indent.first { left: 119px; }
.indent.last { left: 703px; }
.canvas { flex: 1; display: flex; justify-content: center; padding-top: 20px; background: #9299ae; }
.page { width: 840px; padding: 93px 101px 0; display: flex; justify-content: space-between; background: #fff; border: 2px solid #3c4254; border-bottom: 0; border-right-color: #111; box-shadow: 2px 3px 0 #222; clip-path: inset(0 -3px 0 0); }
.corner { width: 25px; height: 30px; border: solid #a5a5a5; border-width: 0 1px 1px 0; }
.flip { border-width: 0 0 1px 1px; }

.vscroll { width: 20px; padding-right: 2px; display: flex; flex-direction: column; background: #eff0f1; }
.vscroll button { height: 22px; display: grid; place-items: center; flex: none; }
.vscroll svg { width: 12px; height: 12px; }
.split { height: 13px; background: #fff; border: 1px solid #71757d; border-top: 0; }
.vscroll .up::before { content: ""; border: 3px solid transparent; border-bottom: 4px solid #333; border-top: 0; }
.vscroll .down::before { content: ""; border: 3px solid transparent; border-top: 4px solid #333; border-bottom: 0; }
.vthumb { height: 274px; border: 1px solid #a5a7aa; border-radius: 2px; display: grid; place-items: center; background: linear-gradient(90deg, #fafafa, #d2d4d7); }
.vthumb i { width: 8px; height: 10px; background: repeating-linear-gradient(#666 0 1px, #fff0 1px 3px); }
.fill { flex: 1; }

.hscroll { height: 24px; padding: 0 2px 0 1px; display: flex; align-items: center; background: #eff0f2; }
.v { width: 18px; height: 21px; display: grid; place-items: center; flex: none; }
.v svg { width: 12px; height: 12px; }
.lt::before { content: ""; border: 3px solid transparent; border-right: 4px solid #444; border-left: 0; }
.rt::before { content: ""; border: 3px solid transparent; border-left: 4px solid #444; border-right: 0; }
.rt { width: 18px; margin-right: 17px; }
.hthumb { flex: 1; height: 20px; margin-left: 2px; border: 1px solid #b5b5b5; border-radius: 2px; display: grid; place-items: center; background: linear-gradient(#f4f4f4 30%, #c5c7ca 55%, #dcdcdc); }
.hthumb i { width: 9px; height: 7px; background: repeating-linear-gradient(90deg, #666 0 1px, #fff0 1px 3px); }

.draw { width: auto; height: 35px; background: linear-gradient(90deg, #fff0 660px, #c2dafa 660px), linear-gradient(#d5e5fe, #c2d9fc 45%, #8aadec 94%, #486bac 96%); border-bottom: 1px solid #8899bb; }
.word { display: flex; align-items: center; gap: 3px; padding-left: 3px; flex: none; }
.w1 { width: 44px; }
.w2 { width: 86px; padding-left: 4px; }
.status { height: 27px; display: flex; align-items: stretch; background: #f0efed; padding: 4px 0 0; }
.cell { display: flex; align-items: center; justify-content: center; border-right: 1px solid #d0d0cc; margin-right: 2px; }
.pg { width: 226px; display: grid; grid-template-columns: 80px 89px 1fr; padding-left: 12px; }
.at { width: 196px; display: grid; grid-template-columns: 76px 50px 1fr; padding-left: 10px; }
.off { width: 32px; color: #aaa; }
.lang { width: 84px; }
.wide { width: 50px; }
.mid { width: 44px; }
.notes { position: absolute; left: 0; top: 0; pointer-events: none; }
.notes path { fill: none; stroke: #000; stroke-width: 2; marker-end: url(#head); }
.notes rect { fill: none; stroke: #000; stroke-width: 2; stroke-dasharray: 2 1 2 1 2 1 2 1 1 2 1 2 1 2 1 2; shape-rendering: crispEdges; }
#head path { fill: #000; stroke: none; marker-end: none; }
```
FILE: rulers.js
```js
// Builds one ruler: a numbered cell per centimetre, each followed by its sub-marks.
function buildRuler(id, cellClass, from, to) {
  const track = document.getElementById(id);
  for (let n = from; n <= to; n++) {
    const cell = document.createElement('div');
    cell.className = cellClass;
    const label = document.createElement('span');
    label.textContent = n === 0 ? '' : Math.abs(n);
    cell.append(label);
    if (id === 'htrack' || n < to) {
      for (let k = 0; k < 3; k++) cell.append(document.createElement('i'));
    }
    track.append(cell);
  }
}
buildRuler('htrack', 'hcell', -3, 17);
buildRuler('vtrack', 'vcell', -2, 11);
```
